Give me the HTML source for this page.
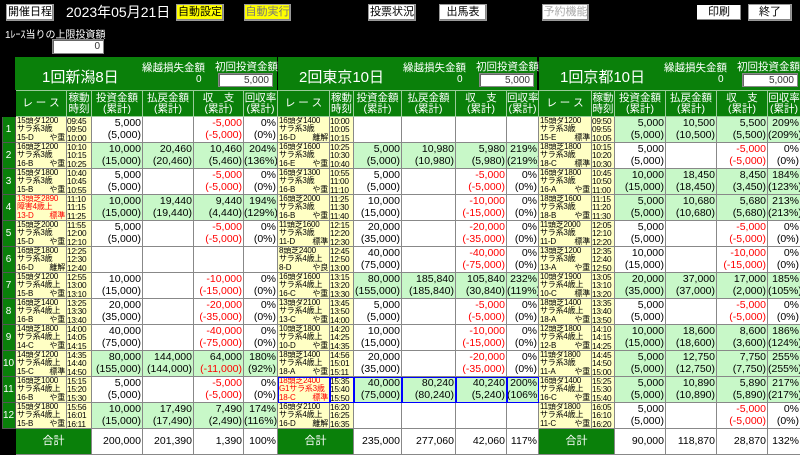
<!DOCTYPE html>
<html><head><meta charset="utf-8">
<style>
*{margin:0;padding:0;box-sizing:border-box}
body{width:800px;height:447px;background:#000;position:relative;overflow:hidden;font-family:"Liberation Sans","Noto Sans CJK JP",sans-serif;color:#000}
.btn{position:absolute;top:4px;height:17px;background:#fff;border:1px solid #999;box-shadow:inset -1px -1px 0 #888;font-size:11px;text-align:center;line-height:15px}
.ab{position:absolute;color:#fff}
.inp{position:absolute;background:#fff;border:1px solid #888;box-shadow:inset 1px 1px 0 #666;font-size:10px;text-align:right;padding-right:3px;line-height:13px;color:#333}
.gh{position:absolute;top:57px;height:33px;background:#0a800a}
table{position:absolute;left:2px;top:90px;border-collapse:collapse;table-layout:fixed;width:798px}
td,th{border:1px solid #888;overflow:hidden;white-space:nowrap}
tr{height:26px}
th{background:#0a800a;color:#fff;font-weight:normal;font-size:10.5px;line-height:11px;border-color:#9c9}
td{background:#fff;font-size:10.5px;line-height:11.5px;text-align:right;padding-right:1px}
td.n{background:#0a800a;color:#fff;text-align:center;font-size:10px;border-color:#555}
td.bk{background:#000;border-color:#000}
td.r,td.t{background:#ffffc4;font-size:8px;line-height:8.2px;text-align:left;padding-left:1px;vertical-align:middle;letter-spacing:-0.2px}
td.t{font-size:8.3px;letter-spacing:-0.3px;padding-left:0}
td.r span{float:right}
td.red{color:#f00}
td.g{background:#c8f8c8}
td.m{color:#f00}
.mm{color:#f00}
td.gt{background:#0a800a;color:#fff;text-align:center;font-size:11px;padding:0}
tr.tot td{height:19px}
.bl{outline:1px solid #00f;outline-offset:-1px}
</style></head><body>
<div class="btn" style="left:6px;width:48px">開催日程</div>
<div class="ab" style="left:66px;top:4px;font-size:14px;line-height:17px">2023年05月21日</div>
<div class="btn" style="left:176px;width:48px;background:#ff0">自動設定</div>
<div class="btn" style="left:244px;width:47px;background:#ff0;color:#777">自動実行</div>
<div class="btn" style="left:368px;width:48px">投票状況</div>
<div class="btn" style="left:439px;width:48px">出馬表</div>
<div class="btn" style="left:542px;width:47px;color:#aaa">予約機能</div>
<div class="btn" style="left:696px;width:46px;border:1px solid #000">印刷</div>
<div class="btn" style="left:748px;width:44px">終了</div>
<div class="ab" style="left:5px;top:26px;font-size:10px">1ﾚｰｽ当りの上限投資額</div>
<div class="inp" style="left:52px;top:39px;width:52px;height:15px">0</div>

<div class="gh" style="left:15px;width:262px"></div>
<div class="gh" style="left:278px;width:259px"></div>
<div class="gh" style="left:539px;width:261px"></div>
<div class="ab" style="left:42px;top:66px;font-size:15px">1回新潟8日</div>
<div class="ab" style="left:142px;top:60px;font-size:10.5px">繰越損失金額</div>
<div class="ab" style="left:196px;top:74px;font-size:10px">0</div>
<div class="ab" style="left:215px;top:59px;font-size:10.5px">初回投資金額</div>
<div class="inp" style="left:218px;top:73px;width:55px;height:14px">5,000</div>
<div class="ab" style="left:299px;top:66px;font-size:15px">2回東京10日</div>
<div class="ab" style="left:403px;top:60px;font-size:10.5px">繰越損失金額</div>
<div class="ab" style="left:457px;top:74px;font-size:10px">0</div>
<div class="ab" style="left:476px;top:59px;font-size:10.5px">初回投資金額</div>
<div class="inp" style="left:479px;top:73px;width:55px;height:14px">5,000</div>
<div class="ab" style="left:560px;top:66px;font-size:15px">1回京都10日</div>
<div class="ab" style="left:664px;top:60px;font-size:10.5px">繰越損失金額</div>
<div class="ab" style="left:718px;top:74px;font-size:10px">0</div>
<div class="ab" style="left:737px;top:59px;font-size:10.5px">初回投資金額</div>
<div class="inp" style="left:742px;top:73px;width:56px;height:14px">5,000</div>

<table>
<colgroup><col style="width:13px">
<col style="width:51px"><col style="width:25px"><col style="width:51px"><col style="width:51px"><col style="width:50px"><col style="width:34px">
<col style="width:52px"><col style="width:24px"><col style="width:48px"><col style="width:54px"><col style="width:51px"><col style="width:32px">
<col style="width:53px"><col style="width:23px"><col style="width:51px"><col style="width:51px"><col style="width:51px"><col style="width:33px">
</colgroup>
<tr><td class="bk"></td>
<th>レ ー ス</th><th>稼動<br>時刻</th><th>投資金額<br>(累計)</th><th>払戻金額<br>(累計)</th><th>収　支<br>(累計)</th><th>回収率<br>(累計)</th>
<th>レ ー ス</th><th>稼動<br>時刻</th><th>投資金額<br>(累計)</th><th>払戻金額<br>(累計)</th><th>収　支<br>(累計)</th><th>回収率<br>(累計)</th>
<th>レ ー ス</th><th>稼動<br>時刻</th><th>投資金額<br>(累計)</th><th>払戻金額<br>(累計)</th><th>収　支<br>(累計)</th><th>回収率<br>(累計)</th></tr>

<tr><td class="n">1</td>
<td class="r">15頭ダ1200<br>サラ系3歳<br><span>や重</span>15-D</td><td class="t">09:45<br>09:50<br>10:00</td><td>5,000<br>(5,000)</td><td></td><td class="m">-5,000<br>(-5,000)</td><td>0%<br>(0%)</td>
<td class="r">16頭ダ1400<br>サラ系3歳<br><span>離解</span>16-D</td><td class="t">10:00<br>10:05<br>10:15</td><td></td><td></td><td></td><td></td>
<td class="r">15頭ダ1200<br>サラ系3歳<br><span>標準</span>15-E</td><td class="t">09:50<br>09:55<br>10:05</td><td class="g">5,000<br>(5,000)</td><td class="g">10,500<br>(10,500)</td><td class="g">5,500<br>(5,500)</td><td class="g">209%<br>(209%)</td></tr>

<tr><td class="n">2</td>
<td class="r">16頭芝1200<br>サラ系3歳<br><span>や重</span>16-B</td><td class="t">10:10<br>10:15<br>10:25</td><td class="g">10,000<br>(15,000)</td><td class="g">20,460<br>(20,460)</td><td class="g">10,460<br>(5,460)</td><td class="g">204%<br>(136%)</td>
<td class="r">16頭ダ1600<br>サラ系3歳<br><span>や重</span>16-E</td><td class="t">10:25<br>10:30<br>10:40</td><td class="g">5,000<br>(5,000)</td><td class="g">10,980<br>(10,980)</td><td class="g">5,980<br>(5,980)</td><td class="g">219%<br>(219%)</td>
<td class="r">18頭芝1800<br>サラ系3歳<br><span>標準</span>18-C</td><td class="t">10:15<br>10:20<br>10:30</td><td>5,000<br>(5,000)</td><td></td><td class="m">-5,000<br>(-5,000)</td><td>0%<br>(0%)</td></tr>

<tr><td class="n">3</td>
<td class="r">15頭ダ1800<br>サラ系3歳<br><span>や重</span>15-B</td><td class="t">10:40<br>10:45<br>10:55</td><td>5,000<br>(5,000)</td><td></td><td class="m">-5,000<br>(-5,000)</td><td>0%<br>(0%)</td>
<td class="r">16頭ダ1300<br>サラ系3歳<br><span>や重</span>16-B</td><td class="t">10:55<br>11:00<br>11:10</td><td>5,000<br>(5,000)</td><td></td><td class="m">-5,000<br>(-5,000)</td><td>0%<br>(0%)</td>
<td class="r">16頭ダ1800<br>サラ系3歳<br><span>や重</span>16-A</td><td class="t">10:45<br>10:50<br>11:00</td><td class="g">10,000<br>(15,000)</td><td class="g">18,450<br>(18,450)</td><td class="g">8,450<br>(3,450)</td><td class="g">184%<br>(123%)</td></tr>

<tr><td class="n">4</td>
<td class="r red">13頭芝2890<br>障害4歳上<br><span>標準</span>13-D</td><td class="t">11:10<br>11:15<br>11:25</td><td class="g">10,000<br>(15,000)</td><td class="g">19,440<br>(19,440)</td><td class="g">9,440<br>(4,440)</td><td class="g">194%<br>(129%)</td>
<td class="r">16頭芝2000<br>サラ系3歳<br><span>や重</span>16-B</td><td class="t">11:25<br>11:30<br>11:40</td><td>10,000<br>(15,000)</td><td></td><td class="m">-10,000<br>(-15,000)</td><td>0%<br>(0%)</td>
<td class="r">18頭芝1600<br>サラ系3歳<br><span>や重</span>18-B</td><td class="t">11:15<br>11:20<br>11:30</td><td class="g">5,000<br>(5,000)</td><td class="g">10,680<br>(10,680)</td><td class="g">5,680<br>(5,680)</td><td class="g">213%<br>(213%)</td></tr>

<tr><td class="n">5</td>
<td class="r">15頭芝2000<br>サラ系3歳<br><span>や重</span>15-D</td><td class="t">11:55<br>12:00<br>12:10</td><td>5,000<br>(5,000)</td><td></td><td class="m">-5,000<br>(-5,000)</td><td>0%<br>(0%)</td>
<td class="r">11頭芝1600<br>サラ系3歳<br><span>標準</span>11-D</td><td class="t">12:15<br>12:20<br>12:30</td><td>20,000<br>(35,000)</td><td></td><td class="m">-20,000<br>(-35,000)</td><td>0%<br>(0%)</td>
<td class="r">11頭芝2000<br>サラ系3歳<br><span>標準</span>11-D</td><td class="t">12:05<br>12:10<br>12:20</td><td>5,000<br>(5,000)</td><td></td><td class="m">-5,000<br>(-5,000)</td><td>0%<br>(0%)</td></tr>

<tr><td class="n">6</td>
<td class="r">16頭芝1800<br>サラ系3歳<br><span>離解</span>16-D</td><td class="t">12:25<br>12:30<br>12:40</td><td></td><td></td><td></td><td></td>
<td class="r">8頭芝2400<br>サラ系4歳上<br><span>や良</span>8-D</td><td class="t">12:45<br>12:50<br>13:00</td><td>40,000<br>(75,000)</td><td></td><td class="m">-40,000<br>(-75,000)</td><td>0%<br>(0%)</td>
<td class="r">13頭芝1200<br>サラ系3歳<br><span>や重</span>13-A</td><td class="t">12:35<br>12:40<br>12:50</td><td>10,000<br>(15,000)</td><td></td><td class="m">-10,000<br>(-15,000)</td><td>0%<br>(0%)</td></tr>

<tr><td class="n">7</td>
<td class="r">15頭ダ1200<br>サラ系4歳上<br><span>や重</span>15-B</td><td class="t">12:55<br>13:00<br>13:10</td><td>10,000<br>(15,000)</td><td></td><td class="m">-10,000<br>(-15,000)</td><td>0%<br>(0%)</td>
<td class="r">16頭ダ1600<br>サラ系4歳上<br><span>や重</span>16-C</td><td class="t">13:15<br>13:20<br>13:30</td><td class="g">80,000<br>(155,000)</td><td class="g">185,840<br>(185,840)</td><td class="g">105,840<br>(30,840)</td><td class="g">232%<br>(119%)</td>
<td class="r">10頭ダ1900<br>サラ系4歳上<br><span>標準</span>10-C</td><td class="t">13:05<br>13:10<br>13:20</td><td class="g">20,000<br>(35,000)</td><td class="g">37,000<br>(37,000)</td><td class="g">17,000<br>(2,000)</td><td class="g">185%<br>(105%)</td></tr>

<tr><td class="n">8</td>
<td class="r">16頭芝1400<br>サラ系4歳上<br><span>や重</span>16-B</td><td class="t">13:25<br>13:30<br>13:40</td><td>20,000<br>(35,000)</td><td></td><td class="m">-20,000<br>(-35,000)</td><td>0%<br>(0%)</td>
<td class="r">13頭ダ2100<br>サラ系4歳上<br><span>や重</span>13-C</td><td class="t">13:45<br>13:50<br>14:00</td><td>5,000<br>(5,000)</td><td></td><td class="m">-5,000<br>(-5,000)</td><td>0%<br>(0%)</td>
<td class="r">18頭芝1400<br>サラ系4歳上<br><span>や重</span>18-A</td><td class="t">13:35<br>13:40<br>13:50</td><td>5,000<br>(5,000)</td><td></td><td class="m">-5,000<br>(-5,000)</td><td>0%<br>(0%)</td></tr>

<tr><td class="n">9</td>
<td class="r">14頭芝1800<br>サラ系4歳上<br><span>や重</span>14-C</td><td class="t">14:00<br>14:05<br>14:15</td><td>40,000<br>(75,000)</td><td></td><td class="m">-40,000<br>(-75,000)</td><td>0%<br>(0%)</td>
<td class="r">10頭芝1800<br>サラ系4歳上<br><span>や重</span>10-D</td><td class="t">14:20<br>14:25<br>14:35</td><td>10,000<br>(15,000)</td><td></td><td class="m">-10,000<br>(-15,000)</td><td>0%<br>(0%)</td>
<td class="r">12頭芝1800<br>サラ系4歳上<br><span>や重</span>12-B</td><td class="t">14:10<br>14:15<br>14:25</td><td class="g">10,000<br>(15,000)</td><td class="g">18,600<br>(18,600)</td><td class="g">8,600<br>(3,600)</td><td class="g">186%<br>(124%)</td></tr>

<tr><td class="n">10</td>
<td class="r">14頭ダ1200<br>サラ系4歳上<br><span>標準</span>15-C</td><td class="t">14:35<br>14:40<br>14:50</td><td class="g">80,000<br>(155,000)</td><td class="g">144,000<br>(144,000)</td><td class="g">64,000<br><span class="mm">(-11,000)</span></td><td class="g">180%<br>(92%)</td>
<td class="r">18頭芝1400<br>サラ系4歳上<br><span>や重</span>18-A</td><td class="t">14:56<br>15:01<br>15:11</td><td>20,000<br>(35,000)</td><td></td><td class="m">-20,000<br>(-35,000)</td><td>0%<br>(0%)</td>
<td class="r">11頭ダ1800<br>サラ系3歳<br><span>や重</span>11-A</td><td class="t">14:45<br>14:50<br>15:00</td><td class="g">5,000<br>(5,000)</td><td class="g">12,750<br>(12,750)</td><td class="g">7,750<br>(7,750)</td><td class="g">255%<br>(255%)</td></tr>

<tr><td class="n">11</td>
<td class="r">16頭芝1000<br>サラ系4歳上<br><span>や重</span>16-B</td><td class="t">15:15<br>15:20<br>15:30</td><td>5,000<br>(5,000)</td><td></td><td class="m">-5,000<br>(-5,000)</td><td>0%<br>(0%)</td>
<td class="r red bl">18頭芝2400<br>G1サラ系3歳<br><span>標準</span>18-C</td><td class="t bl">15:35<br>15:40<br>15:50</td><td class="g bl">40,000<br>(75,000)</td><td class="g bl">80,240<br>(80,240)</td><td class="g bl">40,240<br>(5,240)</td><td class="g bl">200%<br>(106%)</td>
<td class="r">16頭ダ1400<br>サラ系4歳上<br><span>や重</span>16-C</td><td class="t">15:25<br>15:30<br>15:40</td><td class="g">5,000<br>(5,000)</td><td class="g">10,890<br>(10,890)</td><td class="g">5,890<br>(5,890)</td><td class="g">217%<br>(217%)</td></tr>

<tr><td class="n">12</td>
<td class="r">15頭ダ1800<br>サラ系4歳上<br><span>や重</span>15-B</td><td class="t">15:56<br>16:01<br>16:11</td><td class="g">10,000<br>(15,000)</td><td class="g">17,490<br>(17,490)</td><td class="g">7,490<br>(2,490)</td><td class="g">174%<br>(116%)</td>
<td class="r">16頭ダ2100<br>サラ系4歳上<br><span>離解</span>16-D</td><td class="t">16:20<br>16:25<br>16:35</td><td></td><td></td><td></td><td></td>
<td class="r">11頭ダ1800<br>サラ系4歳上<br><span>や重</span>11-C</td><td class="t">16:05<br>16:10<br>16:20</td><td>5,000<br>(5,000)</td><td></td><td class="m">-5,000<br>(-5,000)</td><td>0%<br>(0%)</td></tr>

<tr class="tot"><td class="bk"></td>
<td colspan="2" class="gt">合計</td><td>200,000</td><td>201,390</td><td>1,390</td><td>100%</td>
<td colspan="2" class="gt">合計</td><td>235,000</td><td>277,060</td><td>42,060</td><td>117%</td>
<td colspan="2" class="gt">合計</td><td>90,000</td><td>118,870</td><td>28,870</td><td>132%</td></tr>
</table>
</body></html>
